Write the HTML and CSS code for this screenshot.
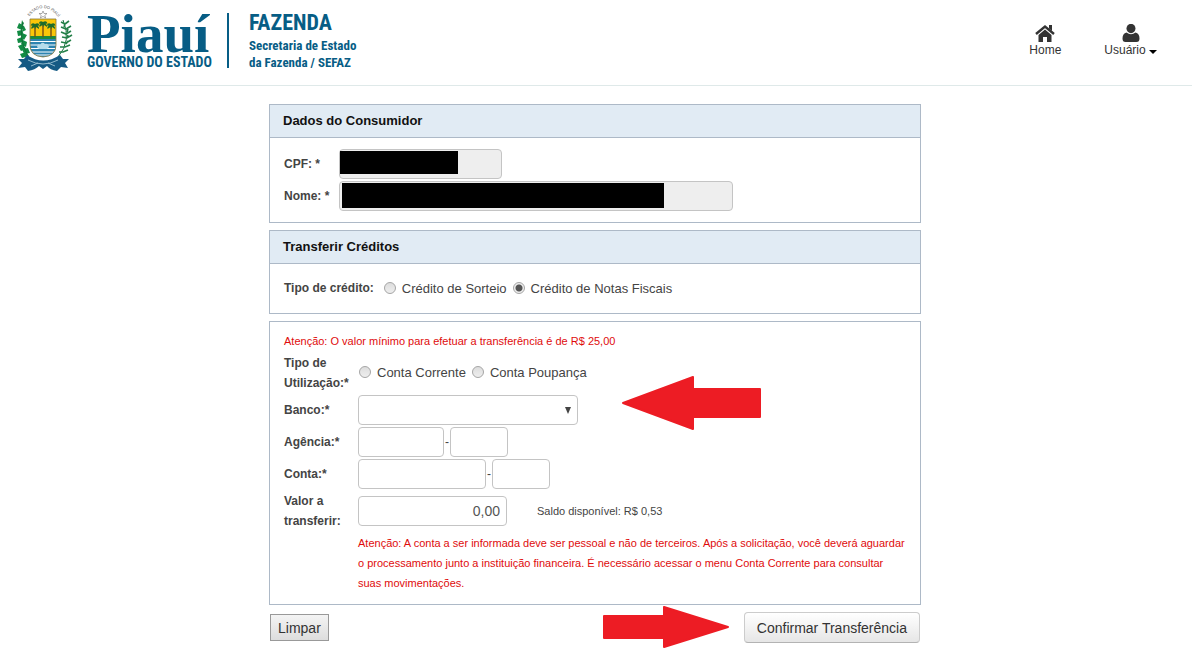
FILE: index.html
```html
<!DOCTYPE html>
<html lang="pt-BR">
<head>
    <meta charset="UTF-8">
    <meta name="viewport" content="width=device-width, initial-scale=1.0">
    <title>Transferir Créditos - SEFAZ Piauí</title>
    <link rel="stylesheet" href="styles.css">
</head>
<body>
    <header class="topbar">
        <div class="brand">
            <svg class="crest" viewBox="0 0 58 68" aria-hidden="true">
                <defs>
                    <path id="crest-arc" d="M13 13 Q28 -7 44 13"/>
                    <clipPath id="shield"><path d="M15 14h26v26q0 11-13 12q-13-1-13-12z"/></clipPath>
                </defs>
                <text class="crest-text"><textPath href="#crest-arc" startOffset="2">ESTADO DO PIAUÍ</textPath></text>
                <path d="M28 6l1 2.500h3l-2.200 1.800 .8 2.700-2.600-1.600-2.600 1.600 .8-2.700-2.200-1.800h3z" fill="#fff" stroke="#777" stroke-width=".6"/>
                <g clip-path="url(#shield)">
                    <rect x="15" y="14" width="26" height="18" fill="#fbc608"/>
                    <rect x="15" y="31" width="26" height="3" fill="#1d8a3c"/>
                    <rect x="15" y="34" width="26" height="19" fill="#2d84b0"/>
                    <path d="M15 36.500h26M15 40h26M15 43.500h26M15 47h26M15 50h26" stroke="#fff" stroke-width="1"/>
                    <path d="M22 42q1-4 3-2q2-4 5-1q3-1 4 3l-2 2h-8z" fill="#b5dceb"/>
                    <path d="M20 22v10M28 20v12M36 22v10" stroke="#754e13" stroke-width="1.400"/>
                    <g fill="#1d6b2c">
                        <path id="palm" d="M28 17q-3-2-4.300 1.500l2 .2q-2 1-1.200 3.300l3-2 .5 2.500 1-2.500 3 2q.5-2.500-1.500-3.300l2-.2q-1-3.500-4.500-1.500z"/>
                        <use href="#palm" x="-8" y="2"/>
                        <use href="#palm" x="8" y="2"/>
                    </g>
                </g>
                <path d="M15 14h26v26q0 11-13 12q-13-1-13-12z" fill="none" stroke="#86763a" stroke-width=".8"/>
                <path d="M7 15l2 4-3 2zM4 18l5 3-2 4-5-2zM9 21l2 4-4 2 1-5zM2 26l5-1 2 5-6 1zM7 28l5 2-3 5-3-3zM2 34l5-2 2 5-6 1zM8 35l4 2-1 5-5-3zM3 41l5-2 3 5-5 2zM7 44l6-1 2 5-6 1zM5 49l6-2 3 4-7 2z" fill="#138b43"/>
                <path d="M8 17Q3 34 13 51" fill="none" stroke="#126a35" stroke-width=".8"/>
                <path d="M48 15Q57 36 43 52" fill="none" stroke="#156f39" stroke-width="1"/>
                <path d="M46 17l4 2 4-3M46 22l5 2 5-3M46 27l5 2 5-3M47 32l5 1 5-3M46 37l5 1 5-3M45 42l5 0 5-2M44 47l4 0 5-2M50 19l-1 3M53 24l-1 3M53 30l-1 3M53 36l-2 3" fill="none" stroke="#248049" stroke-width="1.600"/>
                <path d="M12 50q16 11 33 0l3 4 6 0-4 4 3 5-7-1-4 4q-7-1-10-5l-4 3-4-3q-4 4-11 5l-3-4-7 1 4-5-4-4 6 0z" fill="#155a84"/>
                <path d="M13 55q15 8 30 0M16 61l7-3M40 61l-7-3" fill="none" stroke="#9fc4d5" stroke-width=".9"/>
            </svg>
            <div class="brand-name">
                <span class="brand-state">Piauí</span>
                <span class="brand-gov">GOVERNO DO ESTADO</span>
            </div>
            <div class="brand-dept">
                <span class="dept-title">FAZENDA</span>
                <span class="dept-line">Secretaria de Estado</span>
                <span class="dept-line">da Fazenda / SEFAZ</span>
            </div>
        </div>
        <nav class="menu">
            <a href="#" class="menu-item">
                <svg width="20" height="18" viewBox="0 0 20 18" aria-hidden="true">
                    <path d="M1 10l9-7.500 9 7.500" fill="none" stroke="#333" stroke-width="2.400"/>
                    <path d="M14 1h3v6l-3-2.500zM3.500 11l6.500-5.500 6.500 5.500v7h-4.500v-5h-4v5h-4.500z" fill="#333"/>
                </svg>
                <span>Home</span>
            </a>
            <a href="#" class="menu-item">
                <svg width="20" height="18" viewBox="0 0 20 18" aria-hidden="true">
                    <ellipse cx="10" cy="4.500" rx="4.500" ry="4.700" fill="#333"/>
                    <path d="M5.500 8.500q4.500 3.500 9 0q4 1 4 6q0 3.500-3 3.500h-11q-3 0-3-3.500q0-5 4-6z" fill="#333"/>
                </svg>
                <span>Usuário <i class="caret"></i></span>
            </a>
        </nav>
    </header>

    <main class="content">
        <form class="transfer-form">
            <section class="panel">
                <h2 class="panel-title">Dados do Consumidor</h2>
                <div class="panel-body consumer">
                    <label for="cpf">CPF: *</label>
                    <div class="masked masked-cpf">
                        <input type="text" id="cpf" class="field" disabled>
                        <span class="mask"></span>
                    </div>
                    <label for="nome">Nome: *</label>
                    <div class="masked masked-nome">
                        <input type="text" id="nome" class="field" disabled>
                        <span class="mask"></span>
                    </div>
                </div>
            </section>

            <section class="panel">
                <h2 class="panel-title">Transferir Créditos</h2>
                <div class="panel-body credit-type" role="radiogroup" aria-labelledby="tipo-credito">
                    <span class="label" id="tipo-credito">Tipo de crédito:</span>
                    <label class="option"><input type="radio" name="credito"><span>Crédito de Sorteio</span></label>
                    <label class="option"><input type="radio" name="credito" checked><span>Crédito de Notas Fiscais</span></label>
                </div>
            </section>

            <section class="panel account-panel">
                <div class="panel-body account">
                    <p class="warning warning-top">Atenção: O valor mínimo para efetuar a transferência é de R$ 25,00</p>

                    <span class="label" id="tipo-utilizacao">Tipo de Utilização:*</span>
                    <div class="row row-options" role="radiogroup" aria-labelledby="tipo-utilizacao">
                        <label class="option"><input type="radio" name="utilizacao"><span>Conta Corrente</span></label>
                        <label class="option"><input type="radio" name="utilizacao"><span>Conta Poupança</span></label>
                    </div>

                    <label for="banco">Banco:*</label>
                    <div class="select-wrap">
                        <select id="banco" class="field"><option></option></select>
                    </div>

                    <label for="agencia">Agência:*</label>
                    <div class="row">
                        <input type="text" id="agencia" class="field field-agency">
                        <span class="dash">-</span>
                        <input type="text" class="field field-digit" aria-label="Dígito da agência">
                    </div>

                    <label for="conta">Conta:*</label>
                    <div class="row">
                        <input type="text" id="conta" class="field field-account">
                        <span class="dash">-</span>
                        <input type="text" class="field field-digit" aria-label="Dígito da conta">
                    </div>

                    <label for="valor">Valor a transferir:</label>
                    <div class="row">
                        <input type="text" id="valor" class="field field-value" value="0,00">
                        <span class="balance">Saldo disponível: R$ 0,53</span>
                    </div>

                    <p class="warning warning-bottom">Atenção: A conta a ser informada deve ser pessoal e não de terceiros. Após a solicitação, você deverá aguardar o processamento junto a instituição financeira. É necessário acessar o menu Conta Corrente para consultar suas movimentações.</p>
                </div>
                <svg class="arrow arrow-bank" width="140" height="54" viewBox="0 0 140 54" aria-hidden="true">
                    <path d="M1 27L71 1V13H138V41H71V53Z"/>
                </svg>
            </section>

            <div class="actions">
                <button type="reset" class="btn-clear">Limpar</button>
                <button type="button" class="btn-confirm">Confirmar Transferência</button>
                <svg class="arrow arrow-confirm" width="128" height="42" viewBox="0 0 128 42" aria-hidden="true">
                    <path d="M126 21L62 1V10H2V32H62V41Z"/>
                </svg>
            </div>
        </form>
    </main>
</body>
</html>
```

FILE: styles.css
```css
* {
    box-sizing: border-box;
}
body {
    margin: 0;
    background-color: #fff;
    color: #444;
    font-family: "Liberation Sans", Arial, sans-serif;
    font-size: 12px;
    line-height: 20px;
}

/* header */
.topbar {
    display: flex;
    justify-content: space-between;
    height: 86px;
    padding: 0 35px 0 15px;
    border-bottom: 1px solid #dfe9e9;
}
.brand {
    display: flex;
    align-items: flex-start;
    padding-top: 5px;
    color: #075d85;
}
.crest {
    width: 58px;
    height: 68px;
    overflow: visible;
}
.crest-text {
    font-size: 4px;
    fill: #555;
}
.brand-name {
    display: flex;
    flex-direction: column;
    margin: 8px 15px 0 14px;
}
.brand-state {
    font-family: "Liberation Serif", serif;
    font-size: 55px;
    font-weight: bold;
    line-height: 42px;
}
.brand-gov {
    font-family: "Liberation Sans Narrow", "Roboto Condensed", sans-serif;
    font-size: 14px;
    font-weight: bold;
    line-height: 15px;
    white-space: nowrap;
}
.brand-dept {
    display: flex;
    flex-direction: column;
    margin-top: 8px;
    padding-left: 20px;
    border-left: 2px solid #075d85;
    height: 55px;
    font-family: "Liberation Sans Narrow", "Roboto Condensed", sans-serif;
    font-weight: bold;
}
.dept-title {
    margin-bottom: 4px;
    font-size: 22px;
    line-height: 20px;
}
.dept-line {
    font-size: 13px;
    line-height: 17px;
}
.menu {
    display: flex;
    gap: 43px;
    padding-top: 24px;
}
.menu-item {
    display: flex;
    flex-direction: column;
    align-items: center;
    color: #333;
    line-height: 16px;
    text-decoration: none;
}
.caret {
    display: inline-block;
    border: 4px solid transparent;
    border-top-color: #000;
    border-bottom: 0;
}

/* panels */
.content {
    padding: 18px 20px 12px 18px;
}
.transfer-form {
    max-width: 652px;
    margin: 0 auto;
}
.panel {
    position: relative;
    margin-bottom: 7px;
    border: 1px solid #adb9c7;
}
.panel-title {
    margin: 0;
    padding: 6px 13px;
    border-bottom: 1px solid #adb9c7;
    background: #e1ebf4;
    color: #111;
    font-size: 13px;
}
.panel-body {
    padding: 11px 14px;
}
label,
.label {
    font-weight: bold;
}
.consumer {
    display: grid;
    grid-template-columns: 53px 1fr;
    gap: 2px;
    align-items: center;
}
.credit-type {
    display: flex;
    align-items: center;
    gap: 6px;
    padding: 12px 14px 14px;
}
.credit-type .label {
    margin-right: 4px;
}
.option {
    display: flex;
    align-items: center;
    gap: 6px;
    font-size: 13px;
    font-weight: normal;
}
.option span {
    padding-top: 3px;
}
.option input {
    appearance: none;
    width: 12px;
    height: 12px;
    margin: 0;
    border: 1px solid #a5a5a5;
    border-radius: 50%;
    background: linear-gradient(#ddd, #eee);
}
.option input:checked {
    background: radial-gradient(circle, #555 3px, #eee 4px);
}

/* fields */
.field {
    display: block;
    width: 100%;
    height: 30px;
    padding: 4px 6px;
    border: 1px solid #c4c4c4;
    border-radius: 4px;
    background: #fff;
    color: #555;
    font-family: inherit;
    font-size: 14px;
}
.field:disabled {
    background: #eee;
}
.masked {
    position: relative;
}
.masked-cpf {
    max-width: 163px;
}
.masked-nome {
    max-width: 394px;
}
.mask {
    position: absolute;
    background: #000;
}
.masked-cpf .mask {
    top: 2px;
    left: 1px;
    width: 118px;
    height: 23px;
}
.masked-nome .mask {
    top: 2px;
    left: 3px;
    width: 322px;
    height: 25px;
}
.account {
    display: grid;
    grid-template-columns: 72px 1fr;
    gap: 2px;
    align-items: center;
    padding: 9px 13px 11px 14px;
}
.row {
    display: flex;
    align-items: center;
}
.row-options {
    gap: 6px;
    padding: 0 0 3px 1px;
}
.select-wrap {
    position: relative;
    max-width: 220px;
}
.select-wrap select {
    appearance: none;
}
.select-wrap::after {
    content: "";
    position: absolute;
    top: 12px;
    right: 7px;
    border: 3px solid transparent;
    border-top: 7px solid #444;
    border-bottom: 0;
    pointer-events: none;
}
.dash {
    width: 6px;
    text-align: center;
}
.field-agency {
    width: 86px;
}
.field-account {
    width: 128px;
}
.field-digit {
    width: 58px;
}
.field-value {
    width: 149px;
    text-align: right;
}
.balance {
    margin-left: 30px;
    font-size: 11px;
}
.warning {
    margin: 0;
    color: #e00b0b;
    font-size: 11px;
}
.warning-top {
    grid-column: 1 / -1;
}
.warning-bottom {
    grid-column: 2;
}

/* buttons */
.actions {
    position: relative;
    display: flex;
    justify-content: space-between;
    align-items: center;
    padding: 0 1px;
}
.btn-clear,
.btn-confirm {
    font-family: inherit;
    font-size: 14px;
    color: #333;
}
.btn-clear {
    height: 27px;
    padding: 0 7px;
    border: 1px solid #999;
    background: linear-gradient(#f4f4f4, #ddd);
}
.btn-confirm {
    height: 31px;
    padding: 0 12px;
    border: 1px solid #ccc;
    border-bottom-color: #b3b3b3;
    border-radius: 4px;
    background: linear-gradient(#fff, #e6e6e6);
}
.arrow {
    position: absolute;
    fill: #ed1c24;
    stroke: #ed1c24;
    stroke-width: 2px;
    stroke-linejoin: round;
}
.arrow-bank {
    top: 54px;
    right: 158px;
}
.arrow-confirm {
    top: -6px;
    right: 191px;
}
```
